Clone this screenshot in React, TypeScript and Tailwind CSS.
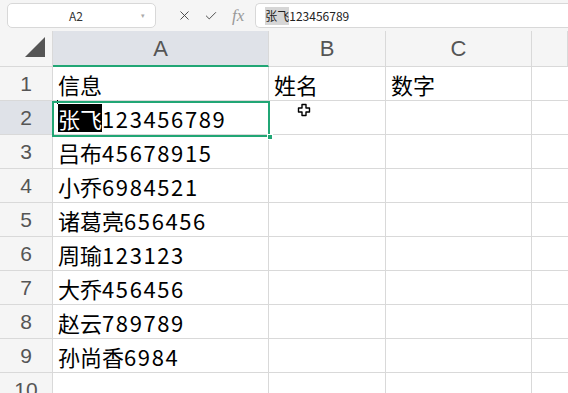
import { X, Check } from "lucide-react";

const rows: string[][] = [
  ["信息", "姓名", "数字"],
  ["张飞123456789", "", ""],
  ["吕布45678915", "", ""],
  ["小乔6984521", "", ""],
  ["诸葛亮656456", "", ""],
  ["周瑜123123", "", ""],
  ["大乔456456", "", ""],
  ["赵云789789", "", ""],
  ["孙尚香6984", "", ""],
  ["", "", ""],
];

const font = { fontFamily: '"Noto Sans CJK SC", "Noto Sans", sans-serif' };

// digits in the sheet run a bit wider than the CJK font's own
function CellText({ text }: { text: string }) {
  const parts = text.match(/[0-9]+|[^0-9]+/g) ?? [];
  return (
    <>
      {parts.map((p, i) =>
        /[0-9]/.test(p) ? (
          <span key={i} className="tracking-[1.6px]">
            {p}
          </span>
        ) : (
          <span key={i}>{p}</span>
        )
      )}
    </>
  );
}

function Crosshair() {
  return (
    <svg width="14" height="14" viewBox="0 0 14 14" className="absolute left-[297px] top-[103px]">
      <path
        d="M5 1.5h4v3.5h3.5v4H9v3.5H5V9H1.5V5H5z"
        fill="#fff"
        stroke="#000"
        strokeWidth="1.4"
        strokeLinejoin="round"
      />
    </svg>
  );
}

export default function App() {
  return (
    <div className="relative w-[568px] h-[393px] overflow-hidden bg-white" style={font}>
      {/* formula bar */}
      <div className="flex items-center h-[31px] bg-[#f5f5f5] pl-[7px]">
        <div className="flex items-center w-[149px] h-[25px] bg-white border border-[#d8d8d8] rounded-[5px]">
          <span className="flex-1 text-center text-[12px] text-[#333] pl-[3px]">A2</span>
          <span className="w-[14px] text-[7px] text-[#aaa]">▾</span>
        </div>
        <X size={15} strokeWidth={1.5} className="ml-[21px] text-[#444]" />
        <Check size={14} strokeWidth={1.6} className="ml-[12px] text-[#444]" />
        <span className="ml-[14px] text-[17px] italic text-[#999]" style={{ fontFamily: '"Liberation Serif", serif' }}>
          fx
        </span>
        <div className="flex items-center ml-[11px] flex-1 h-[25px] bg-white border border-[#d8d8d8] rounded-l-[5px] border-r-0 pl-[9px] text-[12px] text-[#222]">
          <span className="bg-[#d6d6d6]">张飞</span>
          <span>123456789</span>
        </div>
      </div>

      {/* grid */}
      <div className="grid grid-cols-[53px_216px_117px_146px_1fr] grid-rows-[36px_repeat(10,34px)] text-[#555]">
        <div className="flex items-end justify-end bg-[#f5f5f5] border-r border-b border-[#d9d9d9] pr-[7px] pb-[9px]">
          <div className="w-0 h-0 border-l-[20px] border-l-transparent border-b-[20px] border-b-[#555]" />
        </div>
        {["A", "B", "C", ""].map((c, i) => (
          <div
            key={i}
            className={
              i === 0
                ? "flex items-center justify-center bg-[#dfe2e8] border-b-[2px] border-b-[#21a675] border-r border-r-[#d9d9d9] text-[22px]"
                : "flex items-center justify-center bg-[#f5f5f5] border-b border-r border-[#d9d9d9] text-[22px]"
            }
            style={{ fontFamily: '"Liberation Sans", sans-serif' }}
          >
            {c}
          </div>
        ))}
        {rows.map((r, ri) => (
          <RowCells key={ri} n={ri + 1} cells={r} />
        ))}
      </div>

      {/* active cell */}
      <div className="absolute left-[52px] top-[101px] w-[218px] h-[36px] border-2 border-[#21a675] pointer-events-none" />
      <div className="absolute left-[267px] top-[134px] w-[6px] h-[6px] bg-[#21a675] border border-white" />
      <Crosshair />
    </div>
  );
}

function RowCells({ n, cells }: { n: number; cells: string[] }) {
  const active = n === 2;
  return (
    <>
      <div
        className={
          active
            ? "flex items-center justify-center bg-[#dfe2e8] border-r border-b border-[#d9d9d9] text-[21px]"
            : "flex items-center justify-center bg-[#f5f5f5] border-r border-b border-[#d9d9d9] text-[21px]"
        }
        style={{ fontFamily: '"Liberation Sans", sans-serif' }}
      >
        {n}
      </div>
      {cells.map((c, i) => (
        <div
          key={i}
          className="flex items-center pl-[5px] border-r border-b border-[#d9d9d9] text-[22px] leading-[28px] text-black whitespace-nowrap"
        >
          {active && i === 0 ? (
            <>
              <span className="relative bg-black text-white">
                张飞
                <span className="absolute -left-px -top-[4px] w-px h-[4px] bg-black" />
              </span>
              <CellText text="123456789" />
            </>
          ) : (
            <CellText text={c} />
          )}
        </div>
      ))}
      <div className="border-b border-[#d9d9d9]" />
    </>
  );
}
